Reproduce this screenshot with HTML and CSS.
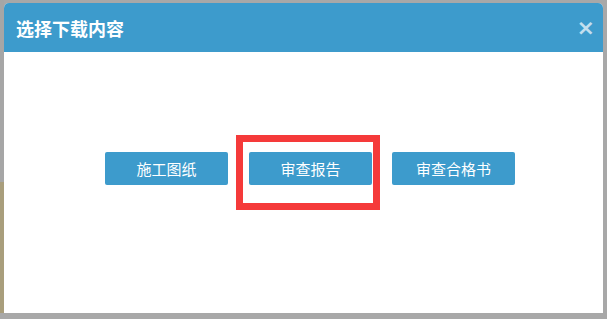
FILE: index.html
```html
<!DOCTYPE html>
<html lang="zh-CN">
<head>
    <meta charset="UTF-8">
    <title>选择下载内容</title>
    <link rel="stylesheet" href="styles.css">
</head>
<body>
<div class="modal">
    <div class="modal-header">
        <h3>选择下载内容</h3>
        <span class="close">&times;</span>
    </div>
    <div class="modal-body">
        <button class="btn">施工图纸</button>
        <button class="btn btn-marked">审查报告</button>
        <button class="btn">审查合格书</button>
    </div>
</div>
</body>
</html>
```

FILE: styles.css
```css
body {
  margin: 0;
  padding: 3px 4px;
  font-family: "Noto Sans CJK SC", "Microsoft YaHei", sans-serif;
  background: linear-gradient(#a6a6a6 182px, #a99e7c 182px) no-repeat 0 0 / 4px 313px, #a8a8a8;
}

.modal {
  width: 599px;
  height: 310px;
  background-color: #fff;
  border-radius: 5px 5px 0 0;
  overflow: hidden;
}

.modal-header {
  height: 49px;
  background-color: #3d9bcc;
  display: flex;
  align-items: center;
  justify-content: space-between;
  padding: 0 8px 0 12px;
}

.modal-header h3 {
  margin: 0;
  color: #fff;
  font-size: 18px;
  font-weight: bold;
  line-height: 1;
}

.close {
  color: rgba(255, 255, 255, 0.7);
  font-family: "DejaVu Sans", sans-serif;
  font-size: 22px;
  font-weight: bold;
  line-height: 1;
}

.modal-body {
  display: flex;
  gap: 20px;
  padding: 100px 0 0 101px;
}

.btn {
  width: 123px;
  height: 33px;
  border: none;
  border-radius: 2px;
  background-color: #3d9bcc;
  color: #fff;
  font-family: inherit;
  font-size: 15px;
  padding: 0;
}

.btn-marked {
  position: relative;
  margin-left: 1px;
}

.btn-marked::after {
  content: "";
  position: absolute;
  left: -13px;
  top: -17px;
  width: 130px;
  height: 61px;
  border: 7px solid #f53a3a;
}
```
